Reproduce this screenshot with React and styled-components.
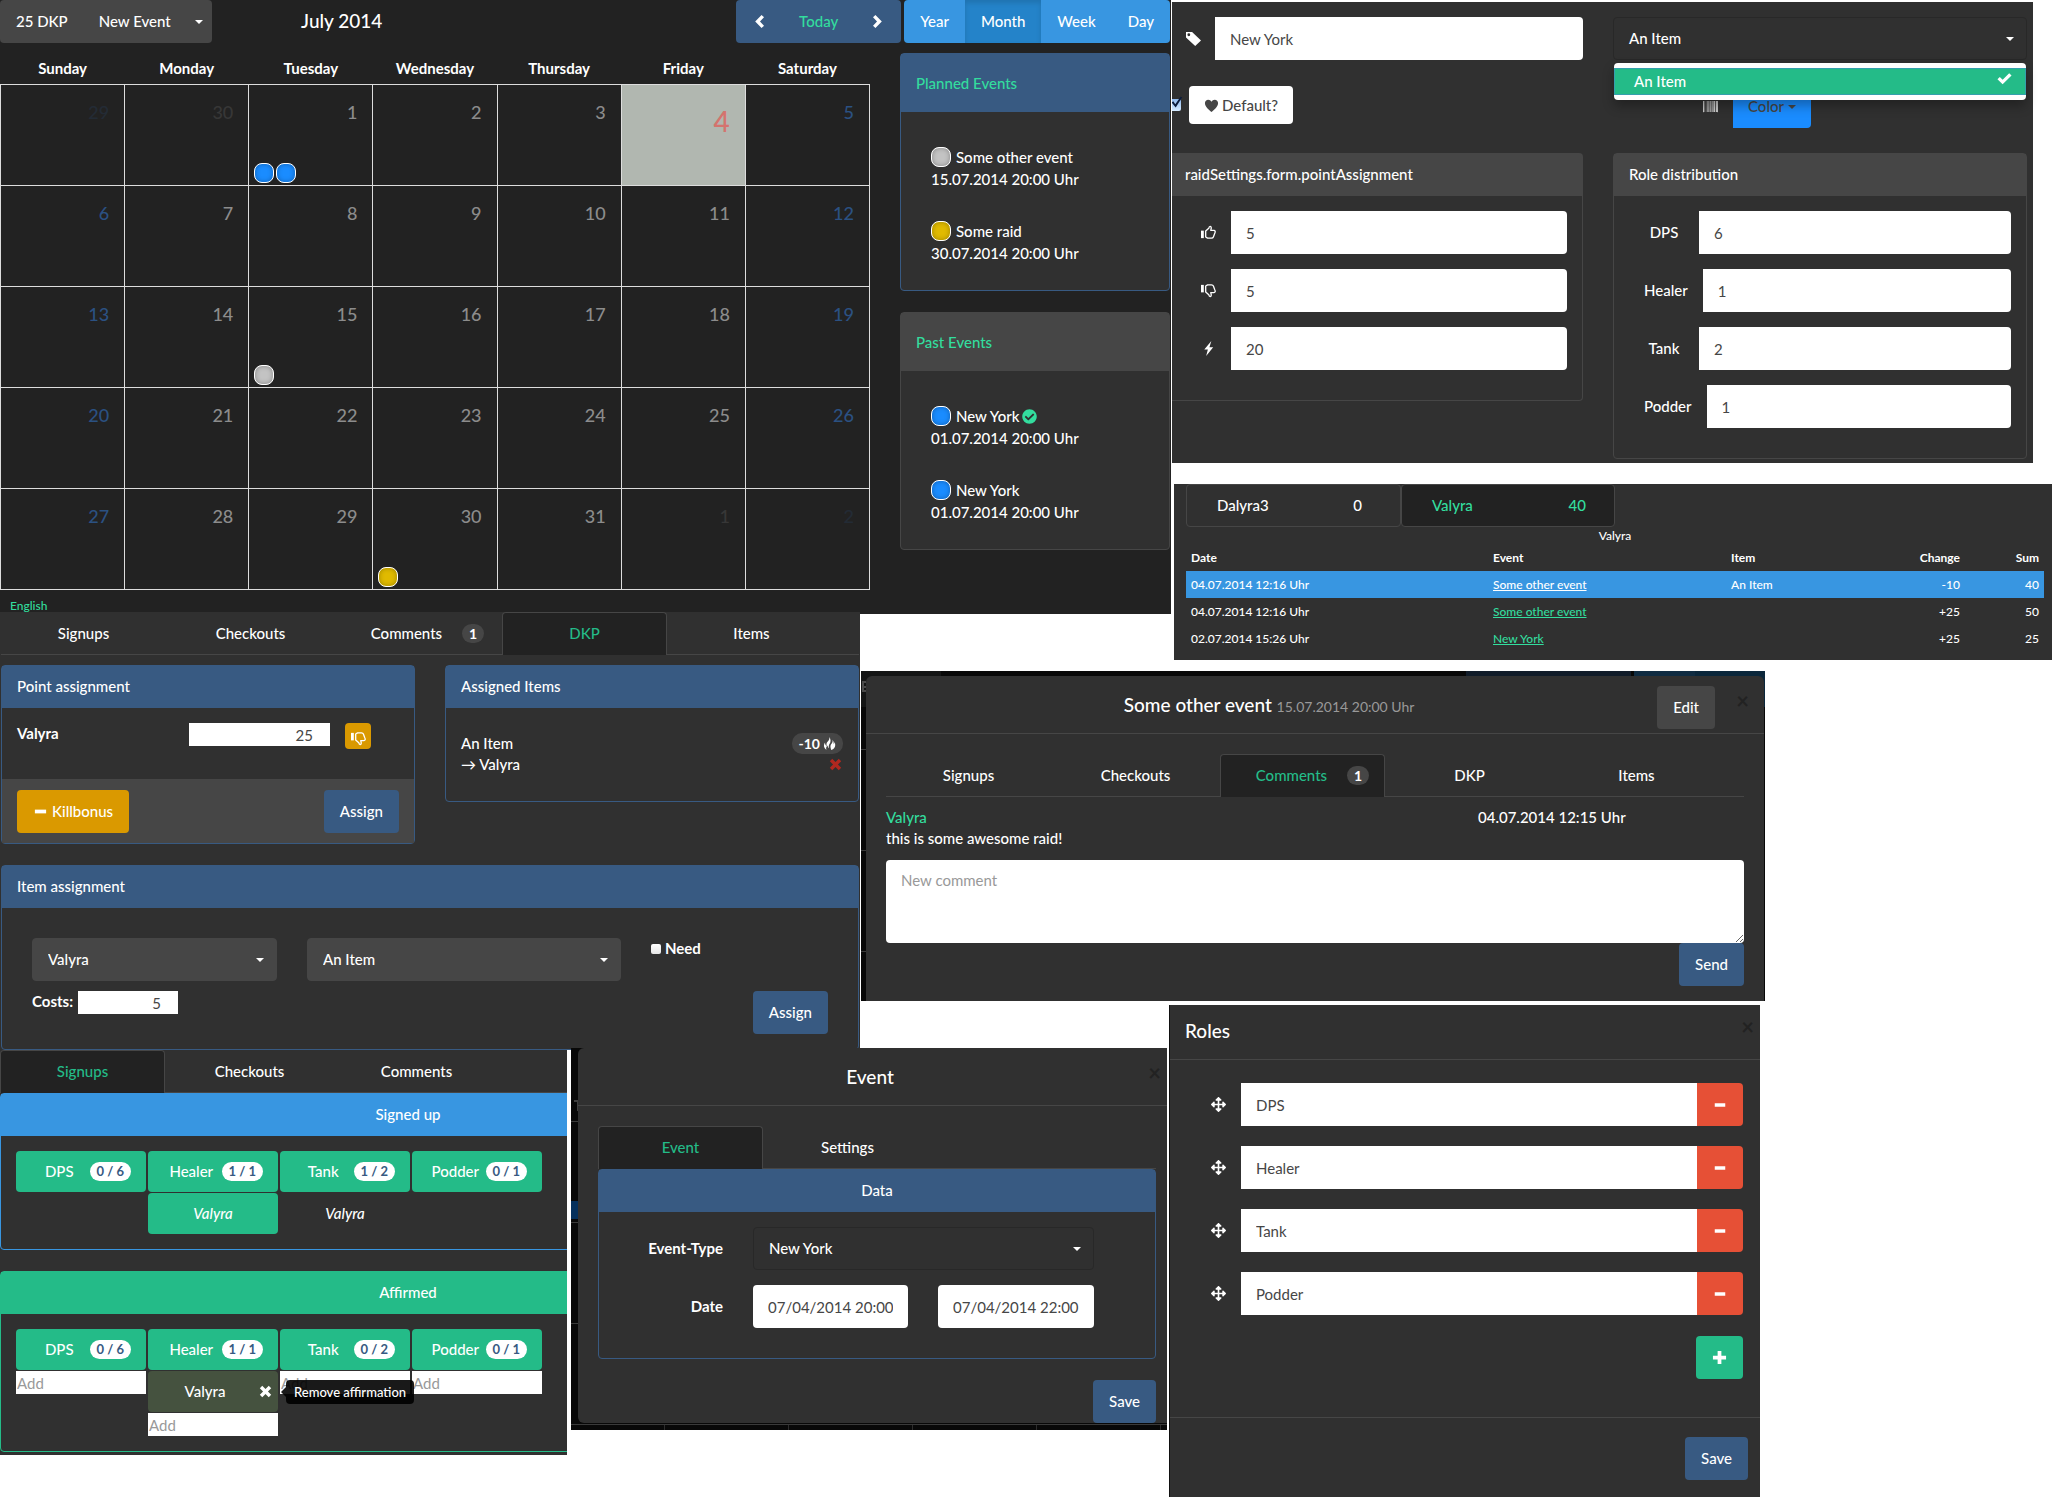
import React from "react";
import styled, { createGlobalStyle, css } from "styled-components";
import { FaArrowsAlt, FaBarcode, FaCheckCircle } from "react-icons/fa";

const c = {
  page: "#222222",
  panel: "#303030",
  gray: "#464646",
  primary: "#385a82",
  info: "#3896e1",
  infoActive: "#2483c9",
  success: "#24bb88",
  link: "#33dd9e",
  danger: "#e65036",
  warning: "#da9900",
  blue: "#1a8cff",
  text: "#ffffff",
};

const GlobalStyle = createGlobalStyle`
  *, *::before, *::after { box-sizing: border-box; }
  body {
    margin: 0;
    background: #fff;
    color: ${c.text};
    font: 500 15px/21px Lato, "Liberation Sans", sans-serif;
  }
  button, input, select, textarea { font: inherit; margin: 0; }
  button { cursor: pointer; }
`;

/* ---------- page grid ---------- */

const Page = styled.main`
  display: grid;
  grid-template-columns:
    minmax(0, 571fr) minmax(0, 290fr) minmax(0, 308fr) minmax(0, 3fr)
    minmax(0, 588fr) minmax(0, 5fr) minmax(0, 268fr) minmax(0, 19fr);
  grid-template-rows:
    minmax(612px, auto) minmax(59px, auto) minmax(334px, auto)
    minmax(43px, auto) auto;
  align-items: start;
`;

const CalendarArea = styled.section`
  grid-area: 1 / 1 / 2 / 5;
  margin: 0 1px -4px 0;
  background: ${c.page};
`;

const SideArea = styled.div`
  grid-area: 1 / 5 / 3 / 9;
  padding-top: 2px;
`;

const DkpArea = styled.section`
  grid-area: 2 / 1 / 5 / 3;
  margin: 0 1px -2px 0;
  padding: 0 1px;
  background: ${c.panel};
  z-index: 1;
`;

const CommentsArea = styled.section`
  grid-area: 3 / 3 / 4 / 7;
  padding: 5px 1px 0 5px;
  background:
    linear-gradient(#4a4a4a, #4a4a4a) 1px 10px / 2px 11px no-repeat,
    linear-gradient(#4a4a4a, #4a4a4a) 1px 10px / 4px 2px no-repeat,
    linear-gradient(#4a4a4a, #4a4a4a) 1px 15px / 4px 2px no-repeat,
    linear-gradient(#4a4a4a, #4a4a4a) 1px 19px / 4px 2px no-repeat,
    linear-gradient(#3a3a3a, #3a3a3a) 0 78px / 5px 1px no-repeat,
    linear-gradient(#3a3a3a, #3a3a3a) 0 179px / 5px 1px no-repeat,
    linear-gradient(#3a3a3a, #3a3a3a) 0 280px / 5px 1px no-repeat,
    linear-gradient(90deg, #141515 80px, #080808 80px, #080808 605px, #111c29 605px,
      #111c29 770px, #080808 770px, #080808 773px, #102c42 773px, #102c42 834px, #0b273b 834px)
      0 0 / 100% 36px no-repeat,
    #080808;
`;

const RolesArea = styled.section`
  grid-area: 4 / 4 / 6 / 6;
  background: ${c.panel};
  border-left: 1px solid #111;
`;

const SignupsArea = styled.section`
  grid-area: 5 / 1 / 6 / 2;
  margin: 2px 4px 0 0;
  padding-bottom: 3px;
  background: ${c.panel};
  overflow: hidden;
`;

const EventArea = styled.section`
  grid-area: 5 / 2 / 6 / 4;
  z-index: 2;
  margin-right: 2px;
  padding: 0 0 7px 7px;
  background:
    linear-gradient(#3f3f3f, #3f3f3f) 3px 52px / 4px 2px no-repeat,
    linear-gradient(#3f3f3f, #3f3f3f) 6px 54px / 1px 9px no-repeat,
    linear-gradient(#3a3a3a, #3a3a3a) 0 73px / 7px 1px no-repeat,
    linear-gradient(#05305c, #05305c) 0 153px / 7px 18px no-repeat,
    linear-gradient(#3a3a3a, #3a3a3a) 0 174px / 7px 1px no-repeat,
    linear-gradient(#3a3a3a, #3a3a3a) 0 275px / 7px 1px no-repeat,
    linear-gradient(#3a3a3a, #3a3a3a) 0 376px / 100% 1px no-repeat,
    repeating-linear-gradient(90deg, transparent 0, transparent 93px, #2c2c2c 93px,
      #2c2c2c 94px, transparent 94px, transparent 124px) 0 377px / 100% 5px no-repeat,
    #080808;
`;

/* ---------- shared controls ---------- */

const tones = {
  gray: c.gray,
  primary: c.primary,
  info: c.info,
  success: c.success,
  danger: c.danger,
  warning: c.warning,
  white: "#fff",
  blue: c.blue,
};

const Button = styled.button`
  display: inline-flex;
  align-items: center;
  justify-content: center;
  gap: 4px;
  height: 43px;
  padding: 0 ${(p) => p.$pad ?? 16}px;
  border: 0;
  border-radius: ${(p) => (p.$join === "right" ? "0 4px 4px 0" : "4px")};
  background: ${(p) => tones[p.$tone]};
  color: ${(p) => (p.$tone === "blue" ? c.gray : c.text)};
  white-space: nowrap;
`;

const field = css`
  border: 0;
  border-radius: 4px;
  background: #fff;
  color: ${c.gray};
  font-weight: 400;
`;

const Input = styled.input`
  ${field}
  flex: 1;
  width: 100%;
  min-width: 0;
  height: 43px;
  padding: 0 15px;
  ${(p) => p.$join === "right" && "border-radius: 0 4px 4px 0;"}
  ${(p) => p.$join === "both" && "border-radius: 0;"}
`;

const SmallInput = styled.input`
  ${field}
  width: ${(p) => (p.$width ? `${p.$width}px` : "100%")};
  height: 23px;
  border-radius: 0;
  padding: 0 ${(p) => (p.$right ? 17 : 1)}px;
  text-align: ${(p) => (p.$right ? "right" : "left")};
  &::placeholder { color: #999; opacity: 1; }
`;

const TextArea = styled.textarea`
  ${field}
  display: block;
  width: 100%;
  height: 83px;
  padding: 10px 15px;
  &::placeholder { color: #999; opacity: 1; }
`;

const SelectBox = styled.span`
  position: relative;
  display: block;
  > svg { position: absolute; right: 13px; top: 20px; pointer-events: none; }
`;

const Select = styled.select`
  appearance: none;
  display: block;
  width: 100%;
  height: 43px;
  padding: 0 30px 0 15px;
  border: 1px solid ${(p) => (p.$outlined ? "#282828" : c.gray)};
  border-radius: 4px;
  background: ${(p) => (p.$outlined ? c.panel : c.gray)};
  color: ${c.text};
`;

const Badge = styled.span`
  flex: none;
  padding: 1px 7px;
  border-radius: 10px;
  background: ${(p) => (p.$light ? "#fff" : c.gray)};
  color: ${(p) => (p.$light ? c.primary : c.text)};
  font-size: ${(p) => (p.$light ? 13 : 14)}px;
  font-weight: 700;
  line-height: 17px;
`;

const TabBar = styled.div`
  display: flex;
  gap: 2px;
  height: 43px;
  border-bottom: 1px solid ${c.gray};
`;

const TabButton = styled.button`
  display: flex;
  align-items: center;
  flex: none;
  width: 165px;
  height: 43px;
  padding: 0 15px 1px;
  border: 1px solid ${(p) => (p.$active ? c.gray : "transparent")};
  border-bottom: 0;
  border-radius: 4px 4px 0 0;
  background: ${(p) => (p.$active ? c.page : "transparent")};
  color: ${(p) => (p.$active ? c.success : c.text)};
`;

const Grow = styled.span`
  flex: 1;
  text-align: center;
`;

const Panel = styled.section`
  border: 1px solid ${(p) => tones[p.$tone]};
  border-radius: 4px;
  ${(p) => p.$bleed && "border-left: 0; border-radius: 0 4px 4px 0;"}
  ${(p) => p.$wide && `width: ${p.$wide}px;`}
`;

const PanelTitle = styled.h3`
  margin: 0;
  padding: 10px ${(p) => (p.$bleed ? 13 : 15)}px 11px;
  background: ${(p) => tones[p.$tone]};
  font-size: 15px;
  font-weight: 500;
  text-align: ${(p) => (p.$center ? "center" : "left")};
`;

const CloseButton = styled.button`
  position: absolute;
  top: ${(p) => p.$top}px;
  right: ${(p) => p.$right}px;
  padding: 0;
  border: 0;
  background: none;
  color: #222;
  font-size: 22px;
  font-weight: 700;
  line-height: 22px;
`;

/* ---------- icons ---------- */

const Svg = ({ size = 15, w, h, box = "0 0 16 16", children }) => (
  <svg width={w || size} height={h || size} viewBox={box} fill="currentColor" aria-hidden="true">
    {children}
  </svg>
);
const Caret = () => <Svg w={8} h={4} box="0 0 8 4"><path d="M0 0h8L4 4z" /></Svg>;
const ChevronLeft = () => <Svg><path d="M10.2 1 3.4 8l6.8 7 2.6-2.5L8.5 8l4.3-4.5z" /></Svg>;
const ChevronRight = () => <Svg><path d="M5.8 1 3.2 3.5 7.5 8l-4.3 4.5L5.8 15l6.8-7z" /></Svg>;
const Minus = ({ size }) => <Svg size={size}><path d="M2 6h12v4H2z" /></Svg>;
const Plus = ({ size }) => <Svg size={size}><path d="M6 1h4v5h5v4h-5v5H6v-5H1V6h5z" /></Svg>;
const Cross = ({ size = 13 }) => (
  <Svg size={size}><path d="M1 4 4 1l4 4 4-4 3 3-4 4 4 4-3 3-4-4-4 4-3-3 4-4z" /></Svg>
);
const Check = () => <Svg><path d="M.5 8.800 3 6.300l3 3 7-7 2.500 2.500L6 14z" /></Svg>;
const Heart = () => (
  <Svg><path d="M8 15C5.500 12.600 1 9.500 1 5.600 1 3.300 2.700 1.900 4.500 1.900 6 1.900 7.300 2.700 8 4.100c.7-1.400 2-2.200 3.500-2.200 1.800 0 3.500 1.400 3.500 3.700C15 9.500 10.500 12.600 8 15z" /></Svg>
);
const Tag = () => (
  <Svg><path fillRule="evenodd" d="M0 1h6.500L16 10l-6.200 6L0 6.800zm3 1.500a1.500 1.500 0 1 0 0 3 1.500 1.500 0 0 0 0-3z" /></Svg>
);
const Flash = () => <Svg><path d="M11 0 3.500 9h3.800L5.500 16 13 6.700H9z" /></Svg>;
const Fire = () => (
  <Svg size={13}>
    <path d="M7.500 0c1 2.500-.3 4-1.900 5.800C4 7.600 4 9.300 4.800 11 3 10.400 2.300 8.600 2.600 6.800.6 9.200.4 13.300 4.300 15.800c-1-2.200-.3-3.700 1.100-5.200.9 1.600.6 2.600 1.500 3.200.4-1.100-.1-2.900.7-4.600C9.900 7 10 2.600 7.500 0z" />
    <path d="M11.500 3.300c1.200 2.600-.6 4.300-1.700 6-1 1.700-.7 3.600.3 6.700 5-1.700 6.100-6.600 3.900-9.700.1 1.200-.2 2.100-.9 2.700.3-2.300-.2-4.400-1.600-5.700z" />
  </Svg>
);
const thumb = (
  <>
    <path d="M0 6h3v8H0z" />
    <path
      d="M5 12.800V6.500l3.300-3c.4-2.500 2.800-2.700 2.600 0l-.5 2.300h3.400c1.500 0 1.700 1.600.9 3l-1.500 4c-.4 1-1 1.200-2 1.200H7z"
      fill="none" stroke="currentColor" strokeWidth="1.400" strokeLinejoin="round"
    />
  </>
);
const ThumbUp = () => <Svg>{thumb}</Svg>;
const ThumbDown = () => <Svg><g transform="matrix(1 0 0 -1 0 16)">{thumb}</g></Svg>;

/* ---------- shared composites ---------- */

const Tabs = ({ items, active, label }) => (
  <TabBar role="tablist" aria-label={label}>
    {items.map(([name, count]) => (
      <TabButton key={name} type="button" role="tab" aria-selected={name === active} $active={name === active}>
        <Grow>{name}</Grow>
        {count && <Badge>{count}</Badge>}
      </TabButton>
    ))}
  </TabBar>
);

const Dropdown = ({ value, outlined, ...rest }) => (
  <SelectBox>
    <Select $outlined={outlined} defaultValue={value} {...rest}>
      <option>{value}</option>
    </Select>
    <Caret />
  </SelectBox>
);

/* ---------- calendar ---------- */

const Toolbar = styled.header`
  display: flex;
  align-items: center;
  height: 43px;
`;

const Group = styled.div`
  display: flex;
  height: 43px;
  border-radius: 4px;
  overflow: hidden;
  background: ${(p) => tones[p.$tone]};
  margin-left: ${(p) => (p.$push ? "auto" : p.$gap ? "3px" : 0)};
  margin-right: ${(p) => (p.$gap ? 1 : 0)}px;
`;

const GroupButton = styled.button`
  display: flex;
  align-items: center;
  padding: 0 ${(p) => p.$pad ?? 16}px;
  border: 0;
  background: ${(p) => (p.$active ? c.infoActive : "transparent")};
  box-shadow: ${(p) => (p.$active ? "inset 0 3px 5px rgba(0,0,0,.125)" : "none")};
  color: ${(p) => (p.$green ? c.link : c.text)};
`;

const Title = styled.h2`
  margin: 0;
  font-size: 19px;
  font-weight: 500;
  line-height: 21px;
`;

const MonthTitle = styled(Title)`
  width: 260px;
  padding-bottom: 2px;
  text-align: center;
`;

const CalendarBody = styled.div`
  display: grid;
  grid-template-columns: minmax(0, 870fr) minmax(0, 270fr);
  gap: 30px;
  align-items: start;
  margin-top: 10px;
  padding-right: 1px;
`;

const Month = styled.table`
  width: 100%;
  table-layout: fixed;
  border-collapse: collapse;
  th { height: 31px; padding: 0; font-weight: 700; }
`;

const Day = styled.td`
  position: relative;
  height: 101px;
  padding: 17px 15px 0 0;
  border: 1px solid #ddd;
  vertical-align: top;
  text-align: right;
  font-size: 18px;
  color: ${(p) => (p.$weekend ? "#2b5182" : "#8c8c8c")};
  ${(p) => p.$today && "background: #b1b7b0; color: #d4736e; font-size: 28px; padding-top: 26px;"}
  > span { opacity: ${(p) => (p.$faded ? 0.2 : 1)}; }
`;

const DayDots = styled.div`
  position: absolute;
  left: 5px;
  bottom: 2px;
  display: flex;
  gap: 2px;
`;

const Dot = styled.i`
  flex: none;
  width: 20px;
  height: 20px;
  border: 1px solid #fff;
  border-radius: 8px;
  background: ${(p) => p.$color};
  box-shadow: inset 0 0 5px rgba(0, 0, 0, 0.3);
`;

const EventPanels = styled.aside`
  display: grid;
  gap: 21px;
`;

const EventTitle = styled(PanelTitle)`
  padding: 19px 15px 18px;
  color: ${c.link};
`;

const EventList = styled.ul`
  display: grid;
  gap: 29px;
  margin: 0;
  padding: 33px 30px 26px;
  list-style: none;
`;

const EventName = styled.div`
  display: flex;
  align-items: center;
  gap: 5px;
  height: 24px;
  > svg { margin-left: -2px; color: ${c.link}; }
`;

const FooterLink = styled.a`
  display: block;
  width: max-content;
  margin: 7px 0 0 10px;
  color: ${c.link};
  font-size: 12px;
  line-height: 17px;
  text-decoration: none;
`;

const weekdays = ["Sunday", "Monday", "Tuesday", "Wednesday", "Thursday", "Friday", "Saturday"];
const weeks = [
  [29, 30, 1, 2, 3, 4, 5],
  [6, 7, 8, 9, 10, 11, 12],
  [13, 14, 15, 16, 17, 18, 19],
  [20, 21, 22, 23, 24, 25, 26],
  [27, 28, 29, 30, 31, 1, 2],
];
const silver = "#c3c3c3";
const gold = "#e0ba00";
const dots = { "0-2": [c.blue, c.blue], "2-2": [silver], "4-3": [gold] };

const eventGroups = [
  { title: "Planned Events", tone: "primary", events: [
    ["Some other event", "15.07.2014 20:00 Uhr", silver],
    ["Some raid", "30.07.2014 20:00 Uhr", gold],
  ] },
  { title: "Past Events", tone: "gray", events: [
    ["New York", "01.07.2014 20:00 Uhr", c.blue, true],
    ["New York", "01.07.2014 20:00 Uhr", c.blue],
  ] },
];

const PanelFill = styled(Panel)`
  background: ${c.panel};
`;

const Calendar = () => (
  <CalendarArea>
    <Toolbar>
      <Group $tone="gray">
        <GroupButton type="button">25 DKP</GroupButton>
        <GroupButton type="button" $pad={15}>New Event</GroupButton>
        <GroupButton type="button" $pad={9} aria-label="More event types"><Caret /></GroupButton>
      </Group>
      <MonthTitle>July 2014</MonthTitle>
      <Group $tone="primary" $push>
        <GroupButton type="button" aria-label="Previous month"><ChevronLeft /></GroupButton>
        <GroupButton type="button" $green>Today</GroupButton>
        <GroupButton type="button" aria-label="Next month"><ChevronRight /></GroupButton>
      </Group>
      <Group $tone="info" $gap>
        {["Year", "Month", "Week", "Day"].map((v) => (
          <GroupButton key={v} type="button" $active={v === "Month"}>{v}</GroupButton>
        ))}
      </Group>
    </Toolbar>
    <CalendarBody>
      <Month>
        <thead>
          <tr>{weekdays.map((d) => <th key={d} scope="col">{d}</th>)}</tr>
        </thead>
        <tbody>
          {weeks.map((week, r) => (
            <tr key={r}>
              {week.map((day, i) => (
                <Day
                  key={day}
                  $weekend={i === 0 || i === 6}
                  $faded={(r === 0 && day > 20) || (r === 4 && day < 10)}
                  $today={r === 0 && day === 4}
                >
                  <span>{day}</span>
                  {dots[`${r}-${i}`] && (
                    <DayDots>{dots[`${r}-${i}`].map((color, n) => <Dot key={n} $color={color} />)}</DayDots>
                  )}
                </Day>
              ))}
            </tr>
          ))}
        </tbody>
      </Month>
      <EventPanels>
        {eventGroups.map((g) => (
          <PanelFill key={g.title} $tone={g.tone}>
            <EventTitle $tone={g.tone}>{g.title}</EventTitle>
            <EventList>
              {g.events.map(([name, date, color, done], n) => (
                <li key={n}>
                  <EventName><Dot $color={color} />{name}{done && <FaCheckCircle size={15} />}</EventName>
                  {date}
                </li>
              ))}
            </EventList>
          </PanelFill>
        ))}
      </EventPanels>
    </CalendarBody>
    <FooterLink href="#english">English</FooterLink>
  </CalendarArea>
);

/* ---------- raid settings ---------- */

const Settings = styled.section`
  display: grid;
  grid-template-columns: minmax(0, 411fr) minmax(0, 414fr);
  gap: 25px 30px;
  align-items: start;
  margin-right: 19px;
  padding: 15px 6px 4px 0;
  background: ${c.panel};
`;

const FieldRow = styled.label`
  display: flex;
  align-items: center;
`;

const Addon = styled.span`
  display: flex;
  justify-content: center;
  flex: none;
  min-width: ${(p) => p.$min}px;
  padding: 0 ${(p) => p.$pad ?? 0}px;
`;

const Fields = styled.div`
  display: grid;
  gap: 15px;
  padding: 15px 15px 30px ${(p) => (p.$bleed ? 13 : 15)}px;
`;

const DefaultRow = styled.div`
  display: flex;
  align-items: center;
  gap: 8px;
  height: 43px;
  padding-bottom: 3px;
  overflow: hidden;
`;

const Tick = styled.span`
  position: relative;
  width: 9px;
  height: 14px;
  > svg { position: absolute; right: -2px; top: -2px; color: #0a1a3a; pointer-events: none; }
`;

const TickBox = styled.input`
  appearance: none;
  position: absolute;
  right: 0;
  top: 1px;
  width: 12px;
  height: 12px;
  border-radius: 2px;
  background: linear-gradient(#8fb8ec, #d5eaff);
`;

const DefaultLabel = styled.label`
  display: flex;
  align-items: center;
  gap: 3px;
  height: 38px;
  padding: 0 15px;
  border-radius: 4px;
  background: #fff;
  color: ${c.gray};
`;

const OpenSelect = styled.div`
  position: relative;
`;

const OpenButton = styled.button`
  display: flex;
  align-items: center;
  justify-content: space-between;
  width: 100%;
  height: 43px;
  padding: 0 12px 0 15px;
  border: 1px solid #282828;
  border-radius: 4px;
  background: ${c.panel};
  color: ${c.text};
`;

const Menu = styled.ul`
  position: absolute;
  z-index: 1;
  top: 46px;
  left: 1px;
  right: 1px;
  margin: 0;
  padding: 5px 0;
  border-radius: 4px;
  background: #fff;
  box-shadow: 0 6px 12px rgba(0, 0, 0, 0.3);
  list-style: none;
`;

const MenuItem = styled.li`
  display: flex;
  justify-content: space-between;
  height: 27px;
  padding: 2px 13px 2px 19px;
  border: 1px solid #35a0ae;
  background: ${c.success};
`;

const ColorRow = styled.div`
  display: flex;
  align-items: center;
  gap: 15px;
  padding-left: 90px;
`;

const RaidSettings = () => (
  <Settings>
    <FieldRow>
      <Addon $min={43}><Tag /></Addon>
      <Input $join="right" defaultValue="New York" aria-label="Name" />
    </FieldRow>
    <OpenSelect>
      <OpenButton type="button" aria-haspopup="listbox" aria-expanded="true">An Item<Caret /></OpenButton>
      <Menu role="listbox">
        <MenuItem role="option" aria-selected="true">An Item<Check /></MenuItem>
      </Menu>
    </OpenSelect>
    <DefaultRow>
      <Tick>
        <TickBox id="default-raid" type="checkbox" defaultChecked />
        <Svg size={13}><path d="M2 8l2-1.500 2.500 3.500L13 1l2 .5L7 14z" /></Svg>
      </Tick>
      <DefaultLabel htmlFor="default-raid"><Heart />Default?</DefaultLabel>
    </DefaultRow>
    <ColorRow>
      <FaBarcode size={15} />
      <Button type="button" $tone="blue" $pad={15} $join="right">Color<Caret /></Button>
    </ColorRow>
    <Panel $tone="gray" $bleed>
      <PanelTitle $tone="gray" $bleed>raidSettings.form.pointAssignment</PanelTitle>
      <Fields $bleed>
        {[[<ThumbUp />, "5", "Signup points"], [<ThumbDown />, "5", "Absence points"], [<Flash />, "20", "Kill bonus"]].map(
          ([icon, value, name]) => (
            <FieldRow key={name}>
              <Addon $min={46}>{icon}</Addon>
              <Input $join="right" defaultValue={value} aria-label={name} />
            </FieldRow>
          )
        )}
      </Fields>
    </Panel>
    <Panel $tone="gray">
      <PanelTitle $tone="gray">Role distribution</PanelTitle>
      <Fields>
        {[["DPS", 6], ["Healer", 1], ["Tank", 2], ["Podder", 1]].map(([role, value]) => (
          <FieldRow key={role}>
            <Addon $min={70} $pad={15}>{role}</Addon>
            <Input $join="right" defaultValue={value} />
          </FieldRow>
        ))}
      </Fields>
    </Panel>
  </Settings>
);

/* ---------- DKP history ---------- */

const History = styled.section`
  margin: 21px 0 0 2px;
  padding: 0 8px 8px 12px;
  background: ${c.panel};
`;

const Members = styled.div`
  display: grid;
  grid-template-columns: 215px 214px;
`;

const Member = styled.button`
  display: flex;
  align-items: center;
  justify-content: space-between;
  height: 43px;
  padding: 0 ${(p) => (p.$active ? 28 : 38)}px 0 30px;
  border: 1px solid ${c.gray};
  border-radius: 4px;
  background: ${(p) => (p.$active ? c.page : "transparent")};
  color: ${(p) => (p.$active ? c.link : c.text)};
`;

const Ledger = styled.table`
  width: 100%;
  table-layout: fixed;
  border-collapse: collapse;
  font-size: 12px;
  line-height: 17px;
  text-align: left;
  th, td { height: 27px; padding: 5px; }
  a { color: ${c.link}; }
  th:nth-child(n + 4), td:nth-child(n + 4) { text-align: right; }
`;

const LedgerRow = styled.tr`
  background: ${(p) => (p.$active ? c.info : "transparent")};
  && a { ${(p) => p.$active && `color: ${c.text};`} }
`;

const LedgerCol = styled.col`
  width: calc(100% * ${(p) => p.$share} / 858);
`;

const ledger = [
  ["04.07.2014 12:16 Uhr", "Some other event", "An Item", "-10", "40"],
  ["04.07.2014 12:16 Uhr", "Some other event", "", "+25", "50"],
  ["02.07.2014 15:26 Uhr", "New York", "", "+25", "25"],
];

const DkpHistory = () => (
  <History>
    <Members>
      <Member type="button"><span>Dalyra3</span><span>0</span></Member>
      <Member type="button" $active><span>Valyra</span><span>40</span></Member>
    </Members>
    <Ledger>
      <caption>Valyra</caption>
      <colgroup>
        {[302, 238, 158, 81, 79].map((share, n) => <LedgerCol key={n} $share={share} />)}
      </colgroup>
      <thead>
        <tr>{["Date", "Event", "Item", "Change", "Sum"].map((h) => <th key={h} scope="col">{h}</th>)}</tr>
      </thead>
      <tbody>
        {ledger.map(([date, event, item, change, sum], n) => (
          <LedgerRow key={n} $active={n === 0}>
            <td>{date}</td><td><a href="#event">{event}</a></td><td>{item}</td><td>{change}</td><td>{sum}</td>
          </LedgerRow>
        ))}
      </tbody>
    </Ledger>
  </History>
);

/* ---------- DKP assignment ---------- */

const TwoPanels = styled.div`
  display: grid;
  grid-template-columns: 1fr 1fr;
  gap: 30px;
  align-items: start;
  margin: 10px 0 21px;
`;

const PointRow = styled.div`
  display: grid;
  grid-template-columns: minmax(0, 172fr) minmax(0, 141fr) minmax(0, 69fr);
  align-items: start;
  height: 71px;
  padding: 15px 15px 0;
  label { font-weight: 700; }
`;

const MiniButton = styled.button`
  display: flex;
  align-items: center;
  justify-content: center;
  width: 26px;
  height: 26px;
  margin-left: 15px;
  padding: 4px 0 0;
  border: 0;
  border-radius: 4px;
  background: ${c.warning};
  color: ${c.text};
`;

const PanelFooter = styled.footer`
  display: flex;
  justify-content: space-between;
  padding: 11px 15px 10px;
  background: ${c.gray};
`;

const AssignedItem = styled.div`
  display: flex;
  justify-content: space-between;
  padding: 25px 15px 26px;
`;

const AssignedSide = styled.div`
  display: flex;
  flex-direction: column;
  align-items: flex-end;
  gap: 4px;
  > span { display: flex; align-items: center; gap: 3px; line-height: 19px; }
  > button { margin-right: 1px; }
`;

const RemoveButton = styled.button`
  padding: 0;
  border: 0;
  background: none;
  color: ${(p) => (p.$red ? "#b0281f" : c.text)};
  line-height: 0;
`;

const ItemForm = styled.div`
  display: grid;
  grid-template-columns: minmax(0, 245fr) minmax(0, 314fr) minmax(0, 177fr);
  gap: 10px 30px;
  align-items: start;
  padding: 30px 30px 15px;
  > button { grid-column: 3; justify-self: end; }
`;

const NeedLabel = styled.label`
  display: flex;
  align-items: center;
  gap: 4px;
  font-weight: 700;
`;

const NeedBox = styled.input`
  appearance: none;
  width: 10px;
  height: 10px;
  border-radius: 2px;
  background: linear-gradient(#fff, #e6e6e6);
`;

const CostLabel = styled.label`
  display: flex;
  gap: 5px;
  grid-column: 1 / 3;
  font-weight: 700;
`;

const DkpAssignment = () => (
  <DkpArea>
    <Tabs label="Raid" active="DKP" items={[["Signups"], ["Checkouts"], ["Comments", 1], ["DKP"], ["Items"]]} />
    <TwoPanels>
      <Panel $tone="primary">
        <PanelTitle $tone="primary">Point assignment</PanelTitle>
        <PointRow>
          <label htmlFor="points">Valyra</label>
          <SmallInput id="points" $right defaultValue="25" />
          <MiniButton type="button" aria-label="Remove points"><ThumbDown /></MiniButton>
        </PointRow>
        <PanelFooter>
          <Button type="button" $tone="warning"><Minus />Killbonus</Button>
          <Button type="button" $tone="primary">Assign</Button>
        </PanelFooter>
      </Panel>
      <Panel $tone="primary">
        <PanelTitle $tone="primary">Assigned Items</PanelTitle>
        <AssignedItem>
          <div>An Item<br />→ Valyra</div>
          <AssignedSide>
            <Badge>-10 <Fire /></Badge>
            <RemoveButton type="button" $red aria-label="Remove item"><Cross /></RemoveButton>
          </AssignedSide>
        </AssignedItem>
      </Panel>
    </TwoPanels>
    <Panel $tone="primary">
      <PanelTitle $tone="primary">Item assignment</PanelTitle>
      <ItemForm>
        <Dropdown value="Valyra" aria-label="Member" />
        <Dropdown value="An Item" aria-label="Item" />
        <NeedLabel><NeedBox type="checkbox" />Need</NeedLabel>
        <CostLabel>Costs:<SmallInput $right $width={100} defaultValue="5" /></CostLabel>
        <Button type="button" $tone="primary">Assign</Button>
      </ItemForm>
    </Panel>
  </DkpArea>
);

/* ---------- comments dialog ---------- */

const Dialog = styled.div`
  position: relative;
  background: ${c.panel};
  border-radius: ${(p) => p.$radius};
`;

const DialogHeader = styled.header`
  display: flex;
  align-items: center;
  height: ${(p) => p.$height}px;
  padding: ${(p) => p.$padding};
  border-bottom: 1px solid ${c.gray};
`;

const DialogTitle = styled(Title)`
  flex: 1;
  padding-bottom: 5px;
  text-align: ${(p) => (p.$left ? "left" : "center")};
  small { color: #999; font-size: 14px; font-weight: 400; }
`;

const DialogBody = styled.div`
  padding: ${(p) => p.$padding};
`;

const Comment = styled.div`
  display: grid;
  grid-template-columns: minmax(0, 592fr) minmax(0, 266fr);
  margin: 10px 0 11px;
  a { color: ${c.link}; text-decoration: none; }
`;

const Actions = styled.div`
  display: flex;
  justify-content: flex-end;
  margin-top: ${(p) => p.$top ?? 0}px;
`;

const CommentsDialog = () => (
  <CommentsArea>
    <Dialog $radius="6px 6px 0 0">
      <DialogHeader $height={58} $padding="6px 49px 0 15px">
        <DialogTitle>Some other event <small>15.07.2014 20:00 Uhr</small></DialogTitle>
        <Button type="button" $tone="gray">Edit</Button>
      </DialogHeader>
      <CloseButton type="button" aria-label="Close" $top={14} $right={15}>×</CloseButton>
      <DialogBody $padding="20px 20px 15px">
        <Tabs label="Event" active="Comments" items={[["Signups"], ["Checkouts"], ["Comments", 1], ["DKP"], ["Items"]]} />
        <Comment>
          <a href="#valyra">Valyra</a>
          <span>04.07.2014 12:15 Uhr</span>
          <span>this is some awesome raid!</span>
        </Comment>
        <TextArea placeholder="New comment" aria-label="New comment" />
        <Actions><Button type="button" $tone="primary">Send</Button></Actions>
      </DialogBody>
    </Dialog>
  </CommentsArea>
);

/* ---------- signups ---------- */

const RoleColumns = styled.div`
  display: grid;
  grid-template-columns: repeat(4, 130px);
  gap: 2px;
  align-items: start;
  padding: 15px;
`;

const RoleColumn = styled.div`
  display: grid;
  gap: 1px;
`;

const Chip = styled.div`
  position: relative;
  display: flex;
  align-items: center;
  gap: ${(p) => (p.$removable ? 12 : 2)}px;
  height: 41px;
  padding: 0 ${(p) => (p.$removable ? 6 : 15)}px 0 15px;
  border-radius: 4px;
  background: ${(p) => p.$bg};
  ${(p) => p.$italic && "font-style: italic;"}
`;

const Tooltip = styled.span`
  position: absolute;
  z-index: 1;
  left: 138px;
  top: 9px;
  padding: 3px 8px;
  border-radius: 4px;
  background: rgba(0, 0, 0, 0.9);
  font-size: 13px;
  line-height: 18px;
  white-space: nowrap;
  &::before {
    content: "";
    position: absolute;
    right: 100%;
    top: 7px;
    border: 5px solid transparent;
    border-left: 0;
    border-right-color: rgba(0, 0, 0, 0.9);
  }
`;

const SignupPanel = styled(Panel)`
  & + & { margin-top: 21px; }
`;

const Role = ({ name, count }) => (
  <Chip $bg={c.success}><Grow>{name}</Grow><Badge $light>{count}</Badge></Chip>
);

const Signups = () => (
  <SignupsArea>
    <Tabs label="Signups" active="Signups" items={[["Signups"], ["Checkouts"], ["Comments"]]} />
    <SignupPanel $tone="info" $wide={816}>
      <PanelTitle $center $tone="info">Signed up</PanelTitle>
      <RoleColumns>
        <RoleColumn><Role name="DPS" count="0 / 6" /></RoleColumn>
        <RoleColumn>
          <Role name="Healer" count="1 / 1" />
          <Chip $bg={c.success} $italic><Grow>Valyra</Grow></Chip>
        </RoleColumn>
        <RoleColumn>
          <Role name="Tank" count="1 / 2" />
          <Chip $bg="transparent" $italic><Grow>Valyra</Grow></Chip>
        </RoleColumn>
        <RoleColumn><Role name="Podder" count="0 / 1" /></RoleColumn>
      </RoleColumns>
    </SignupPanel>
    <SignupPanel $tone="success" $wide={816}>
      <PanelTitle $center $tone="success">Affirmed</PanelTitle>
      <RoleColumns>
        <RoleColumn><Role name="DPS" count="0 / 6" /><SmallInput placeholder="Add" aria-label="Add DPS" /></RoleColumn>
        <RoleColumn>
          <Role name="Healer" count="1 / 1" />
          <Chip $bg="#45523f" $removable>
            <Grow>Valyra</Grow>
            <RemoveButton type="button" aria-label="Remove"><Cross /></RemoveButton>
            <Tooltip role="tooltip">Remove affirmation</Tooltip>
          </Chip>
          <SmallInput placeholder="Add" aria-label="Add healer" />
        </RoleColumn>
        <RoleColumn><Role name="Tank" count="0 / 2" /><SmallInput placeholder="Add" aria-label="Add tank" /></RoleColumn>
        <RoleColumn><Role name="Podder" count="0 / 1" /><SmallInput placeholder="Add" aria-label="Add podder" /></RoleColumn>
      </RoleColumns>
    </SignupPanel>
  </SignupsArea>
);

/* ---------- event dialog ---------- */

const EventForm = styled.div`
  display: grid;
  grid-template-columns: minmax(0, 124fr) minmax(0, 155fr) minmax(0, 156fr);
  gap: 15px 30px;
  align-items: center;
  padding: 15px 61px 30px 0;
  label { font-weight: 700; text-align: right; }
  > span { grid-column: 2 / 4; }
`;

const EventDialog = () => (
  <EventArea>
    <Dialog $radius="6px 0 0 6px">
      <DialogHeader $height={58} $padding="5px 5px 0 0"><DialogTitle>Event</DialogTitle></DialogHeader>
      <CloseButton type="button" aria-label="Close" $top={14} $right={6}>×</CloseButton>
      <DialogBody $padding="20px 11px 0 20px">
        <Tabs label="Event settings" active="Event" items={[["Event"], ["Settings"]]} />
        <Panel $tone="primary">
          <PanelTitle $tone="primary" $center>Data</PanelTitle>
          <EventForm>
            <label htmlFor="event-type">Event-Type</label>
            <Dropdown id="event-type" value="New York" outlined />
            <label htmlFor="event-start">Date</label>
            <Input id="event-start" defaultValue="07/04/2014 20:00" />
            <Input defaultValue="07/04/2014 22:00" aria-label="End date" />
          </EventForm>
        </Panel>
        <Actions $top={21}><Button type="button" $tone="primary">Save</Button></Actions>
      </DialogBody>
    </Dialog>
  </EventArea>
);

/* ---------- roles ---------- */

const RoleRows = styled.div`
  display: grid;
  gap: 20px;
`;

const RolesFooter = styled.footer`
  display: flex;
  justify-content: flex-end;
  padding: 19px 12px 17px;
  border-top: 1px solid ${c.gray};
`;

const Roles = () => (
  <RolesArea>
    <Dialog $radius="0">
      <DialogHeader $height={55} $padding="2px 15px 0"><DialogTitle $left>Roles</DialogTitle></DialogHeader>
      <CloseButton type="button" aria-label="Close" $top={11} $right={6}>×</CloseButton>
      <DialogBody $padding="23px 17px 38px 25px">
        <RoleRows>
          {["DPS", "Healer", "Tank", "Podder"].map((role) => (
            <FieldRow as="div" key={role}>
              <Addon $min={46}><FaArrowsAlt size={15} /></Addon>
              <Input $join="both" defaultValue={role} aria-label={`Role ${role}`} />
              <Button type="button" $tone="danger" $join="right" aria-label={`Remove ${role}`}><Minus size={14} /></Button>
            </FieldRow>
          ))}
        </RoleRows>
        <Actions $top={21}><Button type="button" $tone="success" aria-label="Add role"><Plus size={15} /></Button></Actions>
      </DialogBody>
      <RolesFooter><Button type="button" $tone="primary">Save</Button></RolesFooter>
    </Dialog>
  </RolesArea>
);

export default function App() {
  return (
    <>
      <GlobalStyle />
      <Page>
        <Calendar />
        <SideArea>
          <RaidSettings />
          <DkpHistory />
        </SideArea>
        <DkpAssignment />
        <CommentsDialog />
        <Roles />
        <Signups />
        <EventDialog />
      </Page>
    </>
  );
}
